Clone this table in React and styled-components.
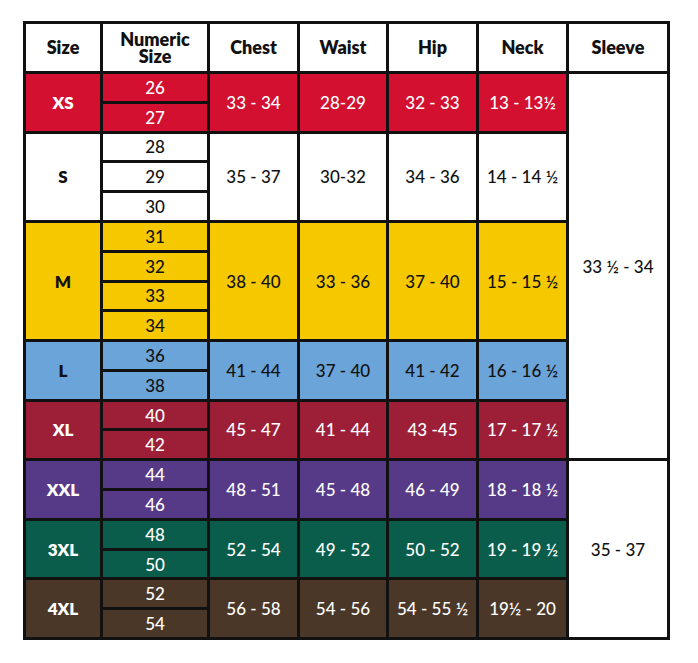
import styled, { createGlobalStyle } from "styled-components";

const GlobalStyle = createGlobalStyle`
  body {
    margin: 0;
    background: #ffffff;
    font-family: "Lato", "Liberation Sans", sans-serif;
  }
`;

const groups = [
  { size: "XS", nums: ["26", "27"], bg: "#d3102f", fg: "#ffffff", vals: ["33 - 34", "28-29", "32 - 33", "13 - 13½"] },
  { size: "S", nums: ["28", "29", "30"], bg: "#ffffff", fg: "#111111", vals: ["35 - 37", "30-32", "34 - 36", "14 - 14 ½"] },
  { size: "M", nums: ["31", "32", "33", "34"], bg: "#f5c800", fg: "#111111", vals: ["38 - 40", "33 - 36", "37 - 40", "15 - 15 ½"] },
  { size: "L", nums: ["36", "38"], bg: "#6ba4d8", fg: "#111111", vals: ["41 - 44", "37 - 40", "41 - 42", "16 - 16 ½"] },
  { size: "XL", nums: ["40", "42"], bg: "#9d1e37", fg: "#ffffff", vals: ["45 - 47", "41 - 44", "43 -45", "17 - 17 ½"] },
  { size: "XXL", nums: ["44", "46"], bg: "#573a87", fg: "#ffffff", vals: ["48 - 51", "45 - 48", "46 - 49", "18 - 18 ½"] },
  { size: "3XL", nums: ["48", "50"], bg: "#0a5d4b", fg: "#ffffff", vals: ["52 - 54", "49 - 52", "50 - 52", "19 - 19 ½"] },
  { size: "4XL", nums: ["52", "54"], bg: "#4a3728", fg: "#ffffff", vals: ["56 - 58", "54 - 56", "54 - 55 ½", "19½ - 20"] },
];

const headers = ["Size", "Numeric\nSize", "Chest", "Waist", "Hip", "Neck", "Sleeve"];

export default function App() {
  let row = 2;
  const cells = [];
  groups.forEach((g) => {
    const n = g.nums.length;
    cells.push(
      <SizeCell key={g.size} $row={row} $span={n} $col={1} $bg={g.bg} $fg={g.fg}>
        {g.size}
      </SizeCell>
    );
    g.nums.forEach((num, i) =>
      cells.push(
        <Cell key={g.size + num} $row={row + i} $span={1} $col={2} $bg={g.bg} $fg={g.fg}>
          {num}
        </Cell>
      )
    );
    g.vals.forEach((v, i) =>
      cells.push(
        <Cell key={g.size + "v" + i} $row={row} $span={n} $col={3 + i} $bg={g.bg} $fg={g.fg}>
          {v}
        </Cell>
      )
    );
    row += n;
  });

  return (
    <>
      <GlobalStyle />
      <Chart>
        {headers.map((h, i) => (
          <HeadCell key={h} $row={1} $span={1} $col={i + 1}>
            {h}
          </HeadCell>
        ))}
        {cells}
        <Cell $row={2} $span={13} $col={7} $bg="#ffffff" $fg="#111111">
          33 ½ - 34
        </Cell>
        <Cell $row={15} $span={6} $col={7} $bg="#ffffff" $fg="#111111">
          35 - 37
        </Cell>
      </Chart>
    </>
  );
}

const Chart = styled.div`
  margin: 21px 0 0 23px;
  width: 647px;
  height: 619px;
  box-sizing: border-box;
  padding: 3px;
  background: #111111;
  display: grid;
  grid-template-columns: 74px 104px 87px 86px 87px 87px 98px;
  grid-template-rows: 47px repeat(19, 1fr);
  gap: 3px;
`;

const Cell = styled.div`
  grid-row: ${(p) => p.$row} / span ${(p) => p.$span};
  grid-column: ${(p) => p.$col};
  background: ${(p) => p.$bg};
  color: ${(p) => p.$fg};
  display: flex;
  align-items: center;
  justify-content: center;
  text-align: center;
  font-size: 17px;
  font-weight: 500;
  white-space: pre-line;
`;

const SizeCell = styled(Cell)`
  font-weight: 800;
  font-size: 17px;
`;

const HeadCell = styled(Cell).attrs({ $bg: "#ffffff", $fg: "#111111" })`
  font-size: 18px;
  font-weight: 800;
  line-height: 0.92;
`;
